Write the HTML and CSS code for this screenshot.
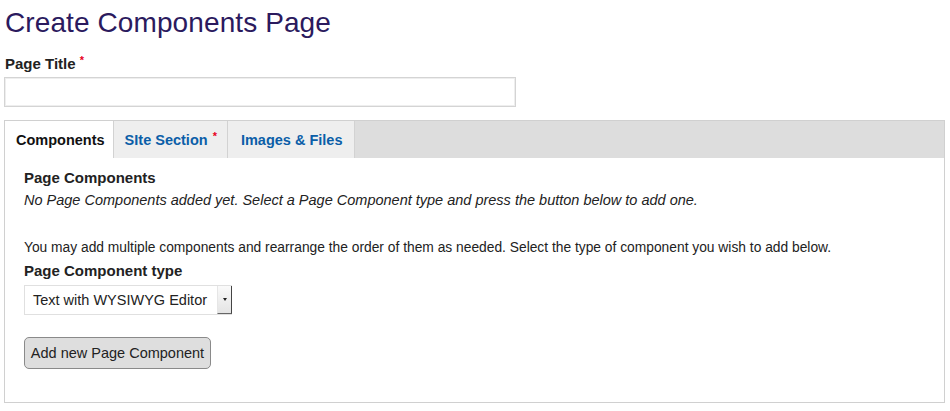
FILE: index.html
```html
<!DOCTYPE html>
<html lang="en">
<head>
<meta charset="utf-8">
<title>Create Components Page</title>
<link rel="stylesheet" href="styles.css">
</head>
<body>
<h1 class="page-title">Create Components Page</h1>
<div class="field">
  <label class="field-label" for="title">Page Title <span class="req">*</span></label>
  <input class="text-input" id="title" type="text">
</div>
<div class="tabs">
  <ul class="tab-bar">
    <li class="tab active">Components</li>
    <li class="tab">SIte Section <span class="req">*</span></li>
    <li class="tab">Images &amp; Files</li>
  </ul>
  <div class="panel">
    <h3 class="panel-heading">Page Components</h3>
    <p class="empty">No Page Components added yet. Select a Page Component type and press the button below to add one.</p>
    <p class="help">You may add multiple components and rearrange the order of them as needed. Select the type of component you wish to add below.</p>
    <div class="panel-label">Page Component type</div>
    <div class="select">
      <span class="select-text">Text with WYSIWYG Editor</span>
      <span class="select-arrow"><span class="tri"></span></span>
    </div>
    <button class="btn" type="button">Add new Page Component</button>
  </div>
</div>
</body>
</html>
```
FILE: styles.css
```css
html, body { background: #fff; }
body {
  margin: 0;
  padding: 0 5px 0 4px;
  font-family: "Liberation Sans", Arial, sans-serif;
  color: #222;
}
.page-title {
  font-size: 28px;
  font-weight: normal;
  color: #2b1a5e;
  margin: 0;
  padding: 6px 0 0 1px;
  line-height: 34px;
  letter-spacing: 0.1px;
}
.field { margin-top: 14px; }
.field-label {
  display: block;
  font-size: 15px;
  font-weight: bold;
  line-height: 20px;
  padding-left: 1px;
  color: #222;
}
.req {
  color: #e8001c;
  font-size: 11px;
  line-height: 0;
  position: relative;
  top: -5px;
}
.text-input {
  display: block;
  box-sizing: border-box;
  width: 512px;
  height: 30px;
  margin: 3px 0 0 0;
  border: 1px solid #d4d4d4;
  box-shadow: inset 0 0 0 1px #eee;
  padding: 0 6px;
}
.tabs {
  margin-top: 13px;
  border: 1px solid #d0d0d0;
  width: 939px;
}
.tab-bar {
  list-style: none;
  margin: 0;
  padding: 0;
  display: flex;
  background: #dddddd;
  height: 37px;
}
.tab {
  background: #eeeeee;
  border-right: 1px solid #d2d2d2;
  color: #0b5ea8;
  font-size: 14.5px;
  font-weight: bold;
  line-height: 38px;
  padding: 0 10px 0 11px;
  white-space: nowrap;
}
.tab:first-child { padding: 0 8px 0 11px; }
.tab:last-child { padding: 0 12px 0 13px; }
.tab.active { background: #fff; color: #111; }
.tab .req { margin-left: 1px; }
.panel {
  padding: 8px 19px 33px;
}
.panel-heading {
  margin: 0;
  font-size: 15px;
  font-weight: bold;
  line-height: 23px;
  color: #222;
}
.empty {
  margin: 0 0 24px;
  font-size: 14.5px;
  font-style: italic;
  line-height: 23px;
}
.help {
  margin: 0;
  font-size: 13.8px;
  line-height: 23px;
}
.panel-label {
  font-size: 15px;
  font-weight: bold;
  line-height: 23px;
}
.select {
  margin-top: 3px;
  display: flex;
  align-items: stretch;
  width: 208px;
  height: 30px;
  box-sizing: border-box;
  border: 1px solid #e0e0e0;
  border-right: none;
  background: #fff;
}
.select-text {
  flex: 1;
  font-size: 14.5px;
  line-height: 28px;
  padding-left: 8px;
  color: #222;
  white-space: nowrap;
}
.select-arrow {
  width: 13px;
  background: linear-gradient(#fafafa, #e4e4e4);
  border-left: 1px solid #e6e6e6;
  border-right: 1px solid #444;
  border-bottom: 1px solid #666;
  display: flex;
  align-items: center;
  justify-content: center;
}
.tri {
  width: 0; height: 0;
  border-left: 2.5px solid transparent;
  border-right: 2.5px solid transparent;
  border-top: 3px solid #222;
}
.btn {
  display: block;
  margin-top: 22px;
  width: 187px;
  height: 32px;
  background: #dedede;
  border: 1px solid #8a8a8a;
  border-radius: 5px;
  font-family: "Liberation Sans", Arial, sans-serif;
  font-size: 14.5px;
  color: #222;
  padding: 0;
}
```
